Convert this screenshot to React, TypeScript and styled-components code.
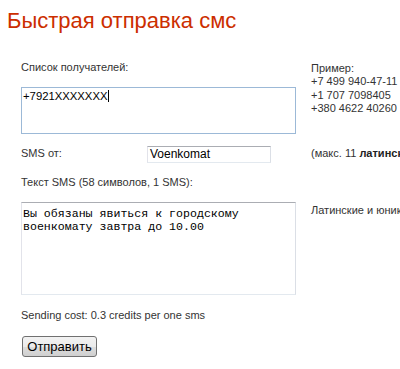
import React from "react";
import styled, { createGlobalStyle } from "styled-components";

const GlobalStyle = createGlobalStyle`
  html, body {
    margin: 0;
    padding: 0;
    background: #ffffff;
    overflow: hidden;
  }
  body {
    font-family: "Liberation Sans", Arial, sans-serif;
    color: #333333;
  }
`;

const Page = styled.div`
  width: 400px;
  height: 369px;
  padding: 8px 0 0 7px;
  box-sizing: border-box;
  overflow: hidden;
`;

const Title = styled.h1`
  margin: 0;
  font-size: 22px;
  line-height: 26px;
  font-weight: normal;
  color: #cc2e00;
  white-space: nowrap;
`;

const Form = styled.div`
  margin: 27px 0 0 14px;
  display: grid;
  grid-template-columns: 275px max-content;
  column-gap: 15px;
`;

const Cell = styled.div<{ $pad?: number }>`
  display: flex;
  flex-direction: column;
  padding-top: ${(p) => p.$pad ?? 0}px;
`;

const Label = styled.div<{ $gap?: number }>`
  font-size: 11px;
  line-height: 13.5px;
  white-space: nowrap;
  margin-bottom: ${(p) => p.$gap ?? 0}px;
`;

const SideText = styled.div`
  font-size: 11px;
  line-height: 13.4px;
  white-space: nowrap;
`;

const Bold = styled.b`
  color: #222;
`;

const Area = styled.div<{ $h: number; $focus?: boolean; $mono?: boolean }>`
  box-sizing: border-box;
  height: ${(p) => p.$h}px;
  width: 275px;
  padding: ${(p) => (p.$mono ? "4px 1px" : "1px 1px")};
  border: 1px solid;
  border-color: ${(p) =>
    p.$focus ? "#9cb9d7" : "#abadb3 #dbdfe6 #e3e9ef #e2e3ea"};
  font-family: ${(p) =>
    p.$mono
      ? '"Liberation Mono", "Courier New", monospace'
      : '"Liberation Sans", Arial, sans-serif'};
  font-size: ${(p) => (p.$mono ? "11.6px" : "11.3px")};
  line-height: ${(p) => (p.$mono ? "13.3px" : "14px")};
  color: #000;
  white-space: pre-wrap;
`;

const Caret = styled.span`
  display: inline-block;
  width: 1px;
  height: 12px;
  margin-left: 1px;
  vertical-align: -2px;
  background: #000;
`;

const SenderRow = styled.div`
  display: flex;
  align-items: center;
  height: 17px;
`;

const SenderLabel = styled(Label)`
  width: 126px;
`;

const TextInput = styled.div`
  box-sizing: border-box;
  width: 124px;
  height: 17px;
  padding: 0 2px;
  border: 1px solid;
  border-color: #abadb3 #dbdfe6 #e3e9ef #e2e3ea;
  font-size: 12px;
  line-height: 15px;
  color: #000;
`;

const Spacer = styled.div<{ $h: number }>`
  height: ${(p) => p.$h}px;
  grid-column: 1 / -1;
`;

const SendButton = styled.button`
  box-sizing: border-box;
  width: 75px;
  height: 21px;
  margin-left: 1px;
  padding: 0;
  border: 1px solid #707070;
  border-radius: 3px;
  background: linear-gradient(#f2f2f2 0%, #ebebeb 50%, #dddddd 51%, #cfcfcf 100%);
  font-family: "Liberation Sans", Arial, sans-serif;
  font-size: 13px;
  color: #000;
`;

export default function App() {
  return (
    <Page>
      <GlobalStyle />
      <Title>Быстрая отправка смс</Title>
      <Form>
        <Cell>
          <Label $gap={12}>Список получателей:</Label>
          <Area $h={47} $focus>
            +7921XXXXXXX
            <Caret />
          </Area>
        </Cell>
        <Cell $pad={1}>
          <SideText>Пример:</SideText>
          <SideText>+7 499 940-47-11</SideText>
          <SideText>+1 707 7098405</SideText>
          <SideText>+380 4622 40260</SideText>
        </Cell>

        <Spacer $h={12} />

        <SenderRow>
          <SenderLabel>SMS от:</SenderLabel>
          <TextInput>Voenkomat</TextInput>
        </SenderRow>
        <SenderRow>
          <SideText>
            (макс. 11 <Bold>латинских символов</Bold>)
          </SideText>
        </SenderRow>

        <Spacer $h={13} />

        <Cell>
          <Label $gap={13}>Текст SMS (58 символов, 1 SMS):</Label>
          <Area $h={93} $mono>
            {"Вы обязаны явиться к городскому\nвоенкомату завтра до 10.00"}
          </Area>
        </Cell>
        <Cell $pad={28}>
          <SideText>Латинские и юникод-символы</SideText>
        </Cell>

        <Spacer $h={14} />

        <Label>Sending cost: 0.3 credits per one sms</Label>
        <div />

        <Spacer $h={13} />

        <div>
          <SendButton>Отправить</SendButton>
        </div>
      </Form>
    </Page>
  );
}
